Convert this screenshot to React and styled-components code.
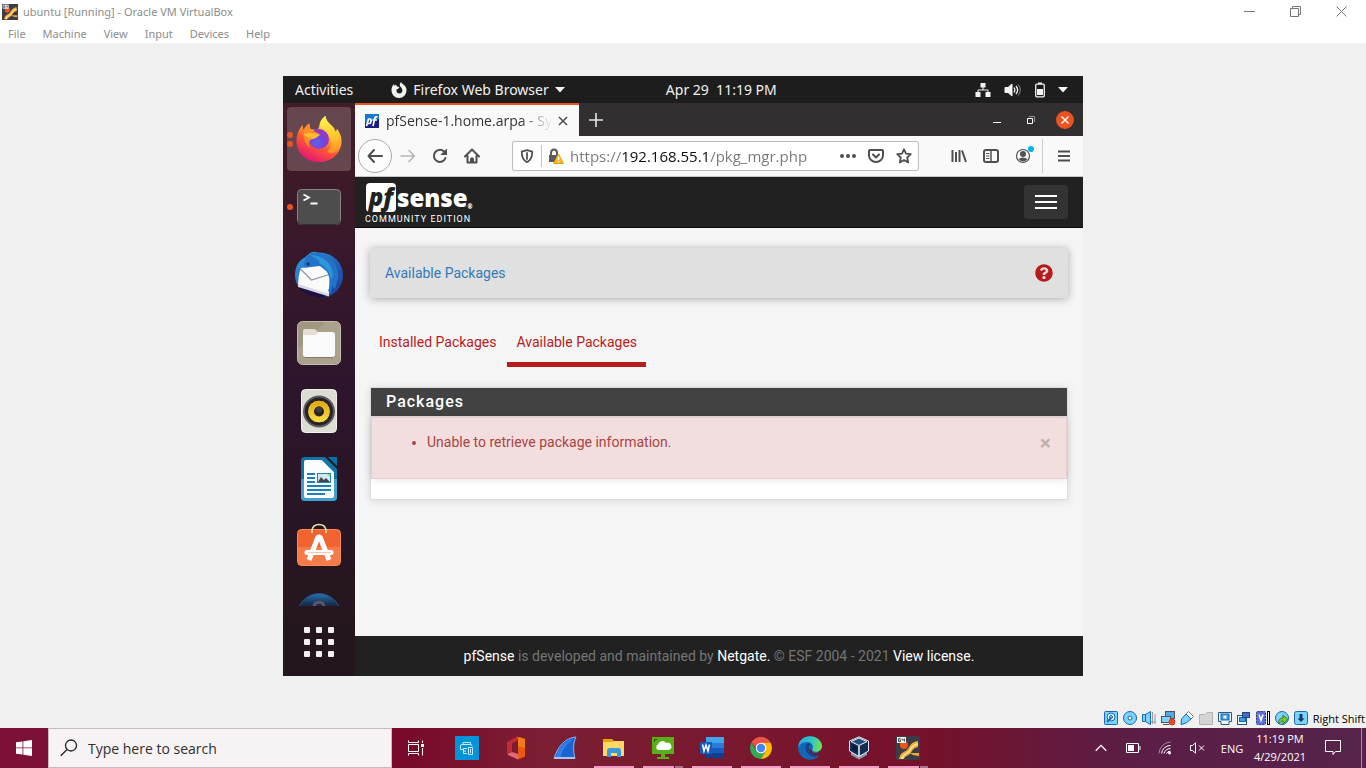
import styled, { createGlobalStyle } from "styled-components"
import { FaQuestionCircle } from "react-icons/fa";

const GlobalStyle = createGlobalStyle`
    * {
        box-sizing: border-box;
    }
    body {
        margin: 0;
        background: #f0f0f0;
        font-family: "Noto Sans", "Open Sans", sans-serif;
    }
    button {
        border: none;
        padding: 0;
        background: none;
        font: inherit;
        color: inherit;
        display: flex;
        align-items: center;
        justify-content: center;
    }
    input {
        border: none;
        padding: 0;
        background: none;
        outline: none;
        min-width: 0;
    }
    a {
        text-decoration: none;
    }
    svg {
        display: block;
        flex: none;
    }
`

/* ---------- host window ---------- */

const MachineLogo = ({ size }) => (
    <svg width={size} height={size} viewBox="0 0 24 24">
        <rect width="24" height="24" fill="#3a3d46" />
        <path d="M3 23C4 17 8 16 11 14C14 11 14 6 22 5V11C16 12 16 16 14 18C11 20 9 20 8 23Z" fill="#f6a73a" />
        <path d="M5 23C6 18 9 18 12 15.500C15 12 15 8 22 7V9C16 10 16 14 13 17C10 19 8 19 7 23Z" fill="#ffe08a" />
        <circle cx="8" cy="9" r="4" fill="#e8581c" />
        <path d="M14 17H23V20C20 20 19 19 17 19Z" fill="#f6a73a" />
        <rect x="1" y="1" width="9" height="6" fill="#f4f4f4" />
        <path d="M4.500 2.500H2.500V5.500H4.500V4H2.500M6 2.500V4H8.500M8.500 2.500V5.500" stroke="#333" fill="none" strokeWidth=".8" />
    </svg>
)

const menus = ["File", "Machine", "View", "Input", "Devices", "Help"]

function TitleBar() {
    return (
        <header>
            <Title>
                <MachineLogo size={16} />
                <h1>ubuntu [Running] - Oracle VM VirtualBox</h1>
                <HostButton aria-label="Minimize">
                    <svg width="11" height="11"><path d="M0 5.500H11" stroke="#777" /></svg>
                </HostButton>
                <HostButton aria-label="Restore">
                    <svg width="11" height="11"><path d="M.5 2.500H8.500V10.500H.5ZM2.500 2.500V.5H10.500V8.500H8.500" stroke="#777" fill="none" /></svg>
                </HostButton>
                <HostButton aria-label="Close">
                    <svg width="11" height="11"><path d="M.5 .5L10.500 10.500M10.500 .5L.5 10.500" stroke="#777" /></svg>
                </HostButton>
            </Title>
            <MenuBar>
                {menus.map((menu) => <button key={menu}>{menu}</button>)}
            </MenuBar>
        </header>
    )
}

/* ---------- gnome ---------- */

function GnomeBar() {
    return (
        <TopBar>
            <TopLeft>
                <button>Activities</button>
                <button>
                    <svg width="16" height="16" viewBox="0 0 16 16">
                        <path d="M8 16A7.500 7.500 0 0 1 .5 8C.5 5.500 1.500 3.500 3 2L3.500 4L5 2.500L6 4.500L8.500 5L7 7L5.500 7.500C5 10 6.500 11.500 8.500 11.500C11 11.500 12 9 11 7C10.500 5.500 9.500 5 9 4C8.500 2.500 9 1 10 0C10.500 2 15.500 3 15.500 8A7.500 7.500 0 0 1 8 16Z" fill="#f2f2f2" />
                    </svg>
                    Firefox Web Browser
                    <svg width="10" height="6"><path d="M0 0H10L5 5.500Z" fill="#f2f2f2" /></svg>
                </button>
            </TopLeft>
            <time>Apr 29&nbsp; 11:19 PM</time>
            <TopRight>
                <svg width="16" height="16" viewBox="0 0 16 16" fill="#f2f2f2">
                    <path d="M5.500 1H10.500V5.500H5.500ZM.5 10H5.500V15H.5ZM10.500 10H15.500V15H10.500Z" />
                    <path d="M8 5V8M3 11V8H13V11" stroke="#f2f2f2" fill="none" />
                </svg>
                <svg width="20" height="16" viewBox="0 0 20 16" fill="none" stroke="#f2f2f2">
                    <path d="M2 5.500H5L9 2V14L5 10.500H2Z" fill="#f2f2f2" />
                    <path d="M11 5.500C12 7 12 9 11 10.500M13 4C15 6.500 15 9.500 13 12" strokeWidth="1.300" />
                    <path d="M15 2.500C18 6 18 10 15 13.500" stroke="#8d8d8d" />
                </svg>
                <svg width="10" height="16" viewBox="0 0 10 16" fill="#f2f2f2">
                    <path d="M3 .5H7V2H3ZM2 7H8V13H2Z" />
                    <rect x=".7" y="2.200" width="8.600" height="12.600" rx="1" stroke="#f2f2f2" strokeWidth="1.300" fill="none" />
                </svg>
                <svg width="12" height="6"><path d="M1 0H11L6 5.500Z" fill="#f2f2f2" /></svg>
            </TopRight>
        </TopBar>
    )
}

const FirefoxLogo = () => (
    <svg width="48" height="48" viewBox="0 0 48 48">
        <defs>
            <linearGradient id="fox" x1=".8" y1="0" x2=".3" y2="1">
                <stop offset="0" stopColor="#fff44f" />
                <stop offset=".35" stopColor="#ffb32c" />
                <stop offset=".65" stopColor="#ff5634" />
                <stop offset="1" stopColor="#e2137a" />
            </linearGradient>
            <linearGradient id="tail" x1=".5" y1="0" x2=".6" y2="1">
                <stop offset="0" stopColor="#fff552" />
                <stop offset=".6" stopColor="#ffc229" />
                <stop offset="1" stopColor="#ff8a2c" />
            </linearGradient>
            <radialGradient id="globe" cx=".4" cy=".7" r=".8">
                <stop offset="0" stopColor="#5a63e8" />
                <stop offset=".5" stopColor="#7a40d8" />
                <stop offset="1" stopColor="#b02fb8" />
            </radialGradient>
        </defs>
        <path d="M24 47C11 47 1.500 38 1.500 26C1.500 19 4 14 7.500 10L8.500 15C10 12 11.500 10 14 8.500L15.500 14L21 15C26 15 22 6 30.500 1C31 7 36 9 39 13L41 17L42 14C45 18 46.500 22 46.500 27C46 39 36 47 24 47Z" fill="url(#fox)" />
        <path d="M30.500 1C31 8 38 10 41 18L42 14C46 19 47 25 46 29C44 37 38 40 32 37C38 32 37 22 31 18C26 15 21 9 30.500 1Z" fill="url(#tail)" />
        <circle cx="24" cy="24" r="10" fill="url(#globe)" />
        <path d="M14 8.500L15.500 15C20 17 23 17 25 20C22 21 22 23 18 24C13 25 13 29 15 33C9 29 8 20 9 16C10.500 13 12 10 14 8.500Z" fill="#ff8c2a" />
        <path d="M8 20C13 17 20 18 25 20C22 21 22 23 18 24Z" fill="#ffbd2e" />
    </svg>
)

const TerminalLogo = () => (
    <svg width="48" height="48" viewBox="0 0 48 48">
        <rect x="2.500" y="6.500" width="43" height="35" rx="4" fill="#4c4d4c" stroke="#858585" />
        <path d="M2.500 38V38Q3 41.500 7 41.500H41Q45 41.500 45.500 38" stroke="#313131" fill="none" />
        <path d="M8.500 11.500L14 14.500L8.500 17.500M15.500 20.500H22.500" stroke="#fff" strokeWidth="1.800" fill="none" />
    </svg>
)

const ThunderbirdLogo = () => (
    <svg width="48" height="48" viewBox="0 0 48 48">
        <defs>
            <linearGradient id="bird" x1="0" y1="0" x2="1" y2="1">
                <stop offset="0" stopColor="#2f9fe4" />
                <stop offset=".5" stopColor="#2268bd" />
                <stop offset="1" stopColor="#183a99" />
            </linearGradient>
        </defs>
        <path d="M15 2C18 0 21 .5 23 1.500C38 1 48 12 48 24C48 37 38 47 24 47L30 43L12 42C4 39 0 32 0 24C0 16 4 9 9 7Z" fill="url(#bird)" />
        <path d="M3 35C10 37 24 43 32 45L27 47C14 44 6 42 3 35Z" fill="#1b1140" />
        <path d="M6 17L25 15L35 23L34 45L3 35C3 28 4 22 6 17Z" fill="#fafafb" />
        <path d="M3 33L34 43V45.500L3 36Z" fill="#d9d6e4" />
        <path d="M5.500 18L16.500 29L34 23.500" stroke="#9193a0" strokeWidth="1.200" fill="none" />
        <path d="M9 16C8 9 12 4 18 2C34 2 44 12 43 27L40 38L37 35L36 42L33 40C37 31 34 19 26 15C20 13 12 18 9 16Z" fill="#2374c8" />
        <path d="M15 4C28 4 37 12 38 24L36 29C35 20 30 15 24 12C27 11 20 7 15 4Z" fill="#35a4e3" opacity=".7" />
        <circle cx="13" cy="13" r="1.500" fill="#17275c" />
    </svg>
)

const FilesLogo = () => (
    <svg width="48" height="48" viewBox="0 0 48 48">
        <rect x="2.500" y="2.500" width="43" height="43" rx="5" fill="#a09780" stroke="#c3bda9" />
        <path d="M3 30L30 3H41Q45 3 45 7V41Q45 45 41 45H7Q3 45 3 41Z" fill="#aaa28d" />
        <path d="M8 19V12Q8 10 10 10H19Q21 10 22 12L23 14H30V19Z" fill="#e4dfd2" />
        <path d="M8 16H20Q22 16 23 13H37Q40 13 40 16V35Q40 38 37 38H11Q8 38 8 35Z" fill="#fafafa" />
        <path d="M10 38.500H38" stroke="#81796a" />
    </svg>
)

const RhythmboxLogo = () => (
    <svg width="48" height="48" viewBox="0 0 48 48">
        <defs>
            <linearGradient id="cone" x2="0" y2="1">
                <stop offset="0" stopColor="#dfa411" />
                <stop offset="1" stopColor="#fbe04a" />
            </linearGradient>
        </defs>
        <rect x="6.500" y="2.500" width="35" height="43" rx="4" fill="#deddd4" stroke="#f3f1e9" />
        <circle cx="24" cy="24.500" r="16" fill="#5d5d61" />
        <circle cx="24" cy="24.500" r="14" fill="#24242d" />
        <circle cx="24" cy="24.500" r="11.500" fill="url(#cone)" stroke="#15151a" />
        <circle cx="24" cy="24.500" r="5" fill="#242424" />
        <circle cx="24" cy="22.500" r="3" fill="#3c3c3c" />
    </svg>
)

const WriterLogo = () => (
    <svg width="48" height="48" viewBox="0 0 48 48">
        <path d="M10 2H30L42 14V42Q42 46 38 46H10Q6 46 6 42V6Q6 2 10 2Z" fill="#0c76a8" />
        <path d="M6 24H42V42Q42 46 38 46H10Q6 46 6 42Z" fill="#41a0cd" />
        <path d="M33 2H42V11Z" fill="#0870a4" />
        <path d="M11 5H27L39 17V41Q39 43 37 43H11Q9 43 9 41V7Q9 5 11 5Z" fill="#fcfcfc" />
        <path d="M27 5L39 17V12L31 5Z" fill="#0c76a8" />
        <path d="M12 19H20M12 23H20M12 27H20M12 31H36M12 35H36M12 39H30" stroke="#1684ba" strokeWidth="2" />
        <rect x="22.500" y="18.500" width="13" height="9" fill="#d0eafb" stroke="#1684ba" />
        <path d="M23 27L26 22L29 25L31 23L35 27Z" fill="#454545" />
        <path d="M32 19H35V22Z" fill="#f1b913" />
    </svg>
)

const SoftwareLogo = () => (
    <svg width="48" height="48" viewBox="0 0 48 48">
        <rect x="2.500" y="6.500" width="43" height="36" rx="4" fill="#f16432" stroke="#f68c5b" />
        <path d="M3 24H45V38Q45 42 41 42H7Q3 42 3 38Z" fill="#f47c49" />
        <path d="M17 10V7Q18 1.500 24 1.500Q30 1.500 31 7V10" stroke="#f3e0b3" strokeWidth="1.600" fill="none" />
        <path d="M14 37L23 14H25L34 37" stroke="#fff" strokeWidth="5" strokeLinejoin="bevel" fill="none" />
        <path d="M12 29.500H36" stroke="#fff" strokeWidth="5" strokeLinecap="round" />
        <path d="M13 29.500H36" stroke="#f0b7a0" strokeWidth=".8" />
    </svg>
)

const HelpLogo = () => (
    <svg width="48" height="48" viewBox="0 0 48 48">
        <defs>
            <linearGradient id="help" x2="0" y2="1">
                <stop offset="0" stopColor="#2573b3" />
                <stop offset=".25" stopColor="#172d4c" />
                <stop offset="1" stopColor="#172d4c" />
            </linearGradient>
        </defs>
        <circle cx="24" cy="24" r="21.500" fill="url(#help)" stroke="#23517a" />
        <path d="M19 15C20 10 28 10 29 15" stroke="#5b5663" strokeWidth="3" fill="none" />
    </svg>
)

const dockApps = [
    { name: "Firefox Web Browser", Logo: FirefoxLogo, windows: 2, active: true },
    { name: "Terminal", Logo: TerminalLogo, windows: 1 },
    { name: "Thunderbird Mail", Logo: ThunderbirdLogo, windows: 0 },
    { name: "Files", Logo: FilesLogo, windows: 0 },
    { name: "Rhythmbox", Logo: RhythmboxLogo, windows: 0 },
    { name: "LibreOffice Writer", Logo: WriterLogo, windows: 0 },
    { name: "Ubuntu Software", Logo: SoftwareLogo, windows: 0 },
    { name: "Help", Logo: HelpLogo, windows: 0 },
]

function Dock() {
    return (
        <DockBar>
            <DockApps>
                {dockApps.map(({ name, Logo, windows, active }) => (
                    <DockItem key={name} aria-label={name} $active={active}>
                        <Logo />
                        <Dots>
                            {Array.from({ length: windows }, (_, i) => <i key={i} />)}
                        </Dots>
                    </DockItem>
                ))}
            </DockApps>
            <ShowApps aria-label="Show Applications">
                {Array.from({ length: 9 }, (_, i) => <i key={i} />)}
            </ShowApps>
        </DockBar>
    )
}

/* ---------- firefox ---------- */

const BrowserIcon = ({ children, size = 16 }) => (
    <svg width={size} height={size} viewBox="0 0 16 16" fill="none" stroke="currentColor" strokeWidth="2" strokeLinecap="round" strokeLinejoin="round">
        {children}
    </svg>
)

function Tabs() {
    return (
        <TabStrip>
            <Tab>
                <svg width="14" height="14" viewBox="0 0 14 14">
                    <rect width="14" height="14" fill="#1b1f83" />
                    <path d="M0 0H14V5L0 9Z" fill="#1277ce" />
                    <g fill="none" stroke="#fff" strokeWidth="1.700">
                        <path d="M1.500 12L3.500 5H5C7 5 6 9.500 4.500 9.500H3M8 12L9.800 4Q10.200 2.500 12.500 3M7.500 6H12" />
                    </g>
                </svg>
                <span>pfSense-1.home.arpa - Sy</span>
                <button aria-label="Close Tab">
                    <svg width="10" height="10"><path d="M1 1L9 9M9 1L1 9" stroke="#4a4a4a" strokeWidth="1.500" /></svg>
                </button>
            </Tab>
            <NewTab aria-label="New Tab">
                <svg width="14" height="14"><path d="M7 0V14M0 7H14" stroke="#e8e8e8" strokeWidth="1.600" /></svg>
            </NewTab>
            <WindowButton aria-label="Minimize">
                <svg width="8" height="8"><path d="M0 6.500H8" stroke="#fff" /></svg>
            </WindowButton>
            <WindowButton aria-label="Restore">
                <svg width="8" height="8" fill="none"><path d="M.5 2.500H5.500V7.500H.5Z" stroke="#fff" /><path d="M2 .5H7.500V6" stroke="#999" /></svg>
            </WindowButton>
            <WindowButton aria-label="Close">
                <svg width="18" height="18"><circle cx="9" cy="9" r="9" fill="#e95420" /><path d="M5.500 5.500L12.500 12.500M12.500 5.500L5.500 12.500" stroke="#fff" strokeWidth="1.400" /></svg>
            </WindowButton>
        </TabStrip>
    )
}

function NavBar() {
    return (
        <Nav>
            <BackButton aria-label="Back">
                <BrowserIcon><path d="M15 8H1.500M7 2L1.500 8L7 14" /></BrowserIcon>
            </BackButton>
            <NavButton aria-label="Forward" $dim>
                <BrowserIcon><path d="M1 8H14.500M9 2.500L14.500 8L9 13.500" strokeWidth="1.600" /></BrowserIcon>
            </NavButton>
            <NavButton aria-label="Reload">
                <BrowserIcon><path d="M13.500 10A6 6 0 1 1 12 3.500L14 5.500" /><path d="M14.500 1.500V6.500H9.500Z" fill="currentColor" strokeWidth="1" /></BrowserIcon>
            </NavButton>
            <NavButton aria-label="Home">
                <BrowserIcon><path d="M1 8.500L8 1.500L15 8.500M3.500 8V14.500H12.500V8" /><path d="M6.500 14V10.500Q8 9 9.500 10.500V14Z" fill="currentColor" strokeWidth="1" /></BrowserIcon>
            </NavButton>
            <UrlBar>
                <UrlButton aria-label="Tracking protection">
                    <BrowserIcon size={14}><path d="M8 1.200L14 3C14 9 12 13 8 15C4 13 2 9 2 3Z" /><path d="M8 4.500V11.500" /></BrowserIcon>
                </UrlButton>
                <UrlDivider />
                <UrlButton aria-label="Site information">
                    <svg width="16" height="16" viewBox="0 0 16 16">
                        <path d="M1 7H11V14H1Z" fill="#5b5b5b" />
                        <path d="M3 7V5Q3 1.500 6 1.500Q9 1.500 9 5V7" stroke="#5b5b5b" strokeWidth="2" fill="none" />
                        <path d="M10.500 6L15.500 15.500H5.500Z" fill="#ffb51b" stroke="#f3a000" strokeLinejoin="round" />
                        <path d="M10.500 8.500V12M10.500 13V14.500" stroke="#fff" strokeWidth="1.500" />
                    </svg>
                </UrlButton>
                <UrlInput aria-label="Address" defaultValue="https://192.168.55.1/pkg_mgr.php" />
                <UrlButton aria-label="Page actions">
                    <BrowserIcon><g fill="currentColor" stroke="none"><circle cx="2" cy="8" r="2" /><circle cx="8" cy="8" r="2" /><circle cx="14" cy="8" r="2" /></g></BrowserIcon>
                </UrlButton>
                <UrlButton aria-label="Save to Pocket">
                    <BrowserIcon><path d="M2 2H14Q15 2 15 3V7.500A7 6.500 0 0 1 1 7.500V3Q1 2 2 2ZM5 6.500L8 9.500L11 6.500" /></BrowserIcon>
                </UrlButton>
                <UrlButton aria-label="Bookmark this page">
                    <BrowserIcon><path d="M8 1.300L10 5.700L14.800 6.200L11.200 9.500L12.200 14.400L8 12L3.800 14.400L4.800 9.500L1.200 6.200L6 5.700Z" strokeWidth="1.800" /></BrowserIcon>
                </UrlButton>
            </UrlBar>
            <NavButton aria-label="Library">
                <BrowserIcon><path d="M1.500 2V14M5 4V14M8.500 2V14M11 2.500L15 14" strokeLinecap="butt" /></BrowserIcon>
            </NavButton>
            <NavButton aria-label="Sidebars">
                <BrowserIcon><rect x="1" y="2" width="14" height="12" rx="2" /><path d="M8 2V14" strokeWidth="1.500" /><path d="M3.500 5.500H6M3.500 8H6M3.500 10.500H6" strokeWidth="1" /></BrowserIcon>
            </NavButton>
            <NavButton aria-label="Account">
                <BrowserIcon><circle cx="8" cy="8" r="6.500" strokeWidth="1.200" /><g fill="currentColor" stroke="none"><circle cx="8" cy="6" r="3" /><path d="M3.500 11Q8 8 12.500 11Q8 16 3.500 11Z" /></g></BrowserIcon>
                <Badge />
            </NavButton>
            <NavDivider />
            <NavButton aria-label="Open menu">
                <BrowserIcon><path d="M2 3.500H14M2 8H14M2 12.500H14" strokeLinecap="butt" /></BrowserIcon>
            </NavButton>
        </Nav>
    )
}

/* ---------- pfSense ---------- */

function PfSense() {
    return (
        <Site>
            <SiteHeader>
                <Brand href="#">
                    <BrandName><b>pf</b>sense<small>®</small></BrandName>
                    <BrandEdition>COMMUNITY EDITION</BrandEdition>
                </Brand>
                <Toggle aria-label="Toggle navigation"><i /><i /><i /></Toggle>
            </SiteHeader>
            <Content>
                <Breadcrumb>
                    <a href="#">Available Packages</a>
                    <HelpLink href="#" aria-label="Help"><FaQuestionCircle size={18} /></HelpLink>
                </Breadcrumb>
                <TabLinks>
                    <TabLink href="#">Installed Packages</TabLink>
                    <TabLink href="#" $active>Available Packages</TabLink>
                </TabLinks>
                <Panel>
                    <PanelTitle>Packages</PanelTitle>
                    <Alert role="alert">
                        <ul>
                            <li>Unable to retrieve package information.</li>
                        </ul>
                        <button aria-label="Close">×</button>
                    </Alert>
                </Panel>
            </Content>
            <Footer>
                <p><a href="#">pfSense</a> is developed and maintained by <a href="#">Netgate.</a> © ESF 2004 - 2021 <a href="#">View license.</a></p>
            </Footer>
        </Site>
    )
}

/* ---------- virtualbox status bar ---------- */

const StatusIcon = ({ children }) => (
    <svg width="14" height="16" viewBox="0 0 14 16" fill="#7cd3fb" stroke="#1668b5">{children}</svg>
)

function StatusBar() {
    return (
        <Status>
            <StatusIcon><rect x=".5" y="1.500" width="13" height="13" rx="1" /><circle cx="7" cy="7" r="4" fill="#e6f7ff" /><circle cx="7" cy="7" r="1.500" /><path d="M3 12L7 8" strokeWidth="2" /></StatusIcon>
            <StatusIcon><circle cx="7" cy="8" r="6.500" /><circle cx="7" cy="8" r="2" fill="#fff" /></StatusIcon>
            <StatusIcon><path d="M.5 4.500H3.500V11.500H.5ZM3.500 4.500L8.500 1.500V14.500L3.500 11.500" /><path d="M10.500 2V14M13 4V14M9 12H14" stroke="#999" /></StatusIcon>
            <StatusIcon><rect x="4.500" y="1.500" width="9" height="7" fill="#4ea9e6" stroke="#555" /><rect x=".5" y="6.500" width="9" height="6" stroke="#555" /><path d="M2 14.500H8" stroke="#555" /><circle cx="11" cy="12" r="3" fill="#e54b2b" stroke="#d0381c" /></StatusIcon>
            <StatusIcon><path d="M8.500 1.500L13.500 6.500L11 9L6 4Z" fill="#fff" stroke="#777" /><path d="M6 4L11 9L6 13L1 14.500L1.500 9Z" /></StatusIcon>
            <StatusIcon><path d="M.5 4.500H6L8 2.500H13.500V14.500H.5Z" fill="#d4d4d4" stroke="#b4b4b4" /></StatusIcon>
            <StatusIcon><path d="M.5 2.500H13.500V11.500H11V14.500H3V11.500H.5Z" fill="#eef8ff" stroke="#28577f" /><rect x="3" y="4" width="8" height="6" fill="#3a9be4" /><rect x="5.500" y="5.500" width="3" height="3" fill="#fff" stroke="none" /></StatusIcon>
            <StatusIcon><rect x=".5" y="5.500" width="9" height="9" fill="#eef8ff" stroke="#28577f" /><rect x="2.500" y="7.500" width="6" height="4" fill="#3a9be4" /><rect x="5.500" y="2.500" width="7" height="5" fill="#426dc5" stroke="#253f8f" /></StatusIcon>
            <StatusIcon><rect x=".5" y="1.500" width="9" height="13" rx="1" fill="#5970d4" stroke="#28307f" strokeDasharray="2 1" /><path d="M3 4.500L5 10.500L7 4.500" stroke="#fff" strokeWidth="1.500" fill="none" /><rect x="11.500" y="1.500" width="2" height="13" fill="#fff" stroke="#000" /></StatusIcon>
            <StatusIcon><circle cx="7" cy="8" r="6.500" /><path d="M4 14C3 10 5 8 8 8V5L13 9.500L8 14V11C6 11 5 12 4 14Z" fill="#76c834" stroke="#367d18" /></StatusIcon>
            <StatusIcon><rect x=".5" y="1.500" width="13" height="13" rx="2" /><path d="M7 4V9" stroke="#123b6c" strokeWidth="3" /><path d="M3.500 8.500H10.500L7 12Z" fill="#123b6c" stroke="none" /></StatusIcon>
            <span>Right Shift</span>
        </Status>
    )
}

/* ---------- windows taskbar ---------- */

const StoreApp = () => (
    <svg width="24" height="24" viewBox="0 0 24 24" fill="none" stroke="#c8ecff">
        <rect width="24" height="24" fill="#0095da" stroke="none" />
        <path d="M8 8.500V6.500H15.500V8.500M5.500 13.500V10Q5.500 8.500 7 8.500H15.500Q17 8.500 17 10M8.500 17.500V12.500H12M8.500 15H11M5.500 13.500H8M8.500 17.500H12" />
        <path d="M13.500 11.500H17.500V18.500H13.500ZM15.500 13V17" />
    </svg>
)
const OfficeApp = () => (
    <svg width="24" height="24" viewBox="0 0 24 24">
        <path d="M3 6L13 .5V5L8 7.500V16L4 18.500Q3 18 3 17Z" fill="#c22b34" />
        <path d="M4 18L8 16L14 18V23.500L4 19Z" fill="#e16b79" />
        <path d="M13 .5L21 3V20.500L14 23.500V6Z" fill="#eb5a0c" />
        <path d="M15 1L21 3V12L14 10V3Z" fill="#f27c14" />
    </svg>
)
const WiresharkApp = () => (
    <svg width="24" height="24" viewBox="0 0 24 24">
        <path d="M1 22.500C5 10 12 2 23 1C20 7 20 15 22 22.500Z" fill="#1c63d2" stroke="#84b6f4" strokeWidth="1" />
        <path d="M3 21C6 11 12 5 20 3C12 10 8 15 8 21Z" fill="#347fe9" />
        <path d="M1 23H22V21H2Z" fill="#a6c8ed" />
    </svg>
)
const ExplorerApp = () => (
    <svg width="24" height="24" viewBox="0 0 24 24">
        <path d="M1 3H10L12 5H22V8H1Z" fill="#e5a50b" />
        <path d="M1 6H10L12 5H22V20H1Z" fill="#ffd868" />
        <path d="M5 21V15Q5 12 8 12H16Q19 12 19 15V21H15V17H9V21Z" fill="#3899dd" />
    </svg>
)
const CloudApp = () => (
    <svg width="24" height="24" viewBox="0 0 24 24">
        <path d="M1 1H23V18H14V21H18V23H6V21H10V18H1Z" fill="#58b017" />
        <path d="M3 3H6V4H4V6H3Z" fill="#245c09" />
        <path d="M7 14A3 3 0 0 1 7 8.500A4.500 4.500 0 0 1 15 7A3.500 3.500 0 0 1 18 14Z" fill="#fff" />
    </svg>
)
const WordApp = () => (
    <svg width="24" height="24" viewBox="0 0 24 24">
        <path d="M6 1H24V7H6Z" fill="#41a5ee" />
        <path d="M6 7H24V12H6Z" fill="#2b7cd3" />
        <path d="M6 12H24V17H6Z" fill="#185abd" />
        <path d="M6 17H24V22H6Z" fill="#103f91" />
        <rect y="6" width="12" height="12" rx="1" fill="#1758bc" />
        <path d="M2.500 8.500L4 15L6 9L8 15L9.500 8.500" stroke="#fff" strokeWidth="1.500" fill="none" />
    </svg>
)
const ChromeApp = () => (
    <svg width="24" height="24" viewBox="0 0 24 24">
        <path d="M12 12L2.500 6.500A11 11 0 0 1 21.500 6.500Z" fill="#ea4335" />
        <path d="M12 12V6.500H21.500A11 11 0 0 1 12 23Z" fill="#fbbc05" />
        <path d="M12 12L16.800 14.800L12 23A11 11 0 0 1 2.500 6.500L7.200 14.500Z" fill="#34a853" />
        <path d="M12 6.500H21.500A11 11 0 0 0 2.500 6.500L7 12Z" fill="#ea5347" />
        <circle cx="12" cy="12" r="5.300" fill="#fff" />
        <circle cx="12" cy="12" r="4.200" fill="#4285f4" />
    </svg>
)
const EdgeApp = () => (
    <svg width="24" height="24" viewBox="0 0 24 24">
        <defs>
            <linearGradient id="edge" x1="0" y1=".2" x2="1" y2=".4">
                <stop offset="0" stopColor="#2aa5e4" />
                <stop offset=".6" stopColor="#36c8c0" />
                <stop offset="1" stopColor="#6fe04f" />
            </linearGradient>
        </defs>
        <circle cx="12" cy="12" r="11.800" fill="#1268b8" />
        <path d="M.3 12C0 4 6 .2 12 .2C20 .2 24 6 24 10C24 15 18 17 15 15C13.500 14 15 13 15 11C15 8 12 6 9 6C4 6 1 9 .3 12Z" fill="url(#edge)" />
        <path d="M8 9C6 13 9 21 17 21C20 21 22 18 22.500 17C19 19 11 18 11 12C11 10 12 9 13 9C12 7 9 7 8 9Z" fill="#16458e" />
        <path d="M13.500 14C14 19 20 18 24 13V17L22 19C17 20 11 18 11.500 12Z" fill="#7a1429" />
    </svg>
)
const VirtualBoxApp = () => (
    <svg width="24" height="24" viewBox="0 0 24 24">
        <path d="M4 14L12 18L20 14V19L12 23.500L4 19Z" fill="#8d9bb0" />
        <path d="M12 .8L21.500 5V15L12 20.500L2.500 15V5Z" fill="#142d55" stroke="#dfe8f2" />
        <path d="M12 2L20 5.500L12 9.500L4 5.500Z" fill="#234d7c" stroke="#f3f7fb" />
        <path d="M12 10V20" stroke="#f3f7fb" strokeWidth="1.500" />
        <path d="M5 8L10 10.500V16.500L5 13.500Z" fill="#0a1d3e" />
    </svg>
)

const taskApps = [
    { name: "Microsoft Store", Icon: StoreApp },
    { name: "Office", Icon: OfficeApp },
    { name: "Wireshark", Icon: WiresharkApp },
    { name: "File Explorer", Icon: ExplorerApp, running: true },
    { name: "Remote Desktop", Icon: CloudApp, running: true, stacked: true },
    { name: "Word", Icon: WordApp, running: true },
    { name: "Chrome", Icon: ChromeApp, running: true },
    { name: "Edge", Icon: EdgeApp, running: true },
    { name: "VirtualBox Manager", Icon: VirtualBoxApp, running: true },
    { name: "ubuntu", Icon: () => <MachineLogo size={24} />, running: true, stacked: true },
]

function Taskbar() {
    return (
        <Bar>
            <StartButton aria-label="Start">
                <svg width="16" height="16" viewBox="0 0 16 16" fill="#fff">
                    <path d="M0 2.300L6.500 1.400V7.500H0ZM7.300 1.300L16 0V7.500H7.300ZM0 8.300H6.500V14.600L0 13.700ZM7.300 8.300H16V16L7.300 14.700Z" />
                </svg>
            </StartButton>
            <Search>
                <svg width="18" height="18" viewBox="0 0 18 18" fill="none" stroke="#222" strokeWidth="1.300">
                    <circle cx="11" cy="6.500" r="5.500" /><path d="M7 10.500L.8 16.700" />
                </svg>
                <input type="text" aria-label="Search" placeholder="Type here to search" />
            </Search>
            <StartButton aria-label="Task View">
                <svg width="18" height="16" viewBox="0 0 18 16" fill="none" stroke="#fff">
                    <path d="M1.500 .5V2.500H11.500V.5M1.500 15.500V13.500H11.500V15.500M1.500 4.500H11.500V11.500H1.500ZM15.500 .5V3M15.500 8V15.500" />
                    <rect x="14" y="4" width="3" height="3" fill="#fff" stroke="none" />
                </svg>
            </StartButton>
            <TaskApps>
                {taskApps.map(({ name, Icon, running, stacked }) => (
                    <TaskApp key={name} aria-label={name} $running={running} $stacked={stacked}>
                        <Icon />
                    </TaskApp>
                ))}
            </TaskApps>
            <Tray>
                <TrayButton aria-label="Show hidden icons">
                    <svg width="12" height="8"><path d="M.7 6.700L6 1.400L11.300 6.700" stroke="#fff" strokeWidth="1.300" fill="none" /></svg>
                </TrayButton>
                <TrayButton aria-label="Battery">
                    <svg width="15" height="10"><path d="M.5 .5H12.500V9.500H.5ZM14 3V7" stroke="#fff" fill="none" /><rect x="2" y="2" width="6" height="6" fill="#fff" /></svg>
                </TrayButton>
                <TrayButton aria-label="Network">
                    <svg width="14" height="14" fill="none" stroke="#fff">
                        <path d="M1 12.500A12 12 0 0 1 12.500 1" stroke="#a2889f" />
                        <path d="M3.500 12.500A9 9 0 0 1 12.500 4.500M6 12.500A7 7 0 0 1 12.500 7.500M8.500 12.500A4 4 0 0 1 12.500 10.200" />
                        <circle cx="11.500" cy="12" r="1" fill="#fff" />
                    </svg>
                </TrayButton>
                <TrayButton aria-label="Volume">
                    <svg width="15" height="12" fill="none" stroke="#fff"><path d="M.5 3.500H2.500L5.500 .8V11.200L2.500 8.500H.5ZM9 3.500L14 8.500M14 3.500L9 8.500" /></svg>
                </TrayButton>
                <Language>ENG</Language>
                <Clock>
                    <time>11:19 PM</time>
                    <time>4/29/2021</time>
                </Clock>
                <Notifications aria-label="Notifications">
                    <svg width="16" height="16"><path d="M.5 .5H15.500V11.500H10.500L8 14.500V11.500H.5Z" stroke="#fff" strokeWidth="1" fill="none" /></svg>
                </Notifications>
                <ShowDesktop aria-label="Show desktop" />
            </Tray>
        </Bar>
    )
}

export default function App() {
    return (
        <Page>
            <GlobalStyle />
            <TitleBar />
            <Guest>
                <GnomeBar />
                <Desktop>
                    <Dock />
                    <Browser>
                        <Tabs />
                        <NavBar />
                        <PfSense />
                    </Browser>
                </Desktop>
            </Guest>
            <StatusBar />
            <Taskbar />
        </Page>
    )
}

const Page = styled.div`
    display: flex;
    flex-direction: column;
    min-height: 100vh;
`

const Title = styled.div`
    display: flex;
    align-items: center;
    height: 23px;
    padding: 0 2px;
    background: #fff;
    color: #8c8c8c;
    h1 {
        flex: 1;
        margin: 0 0 0 5px;
        font-size: 11px;
        font-weight: 400;
    }
`

const HostButton = styled.button`
    width: 46px;
    height: 22px;
`

const MenuBar = styled.nav`
    display: flex;
    gap: 1px;
    height: 20px;
    background: #fff;
    font-size: 11px;
    color: #8c8c8c;
    button {
        padding: 0 8px;
    }
`

const Guest = styled.main`
    display: flex;
    flex-direction: column;
    flex: 1;
    width: 100%;
    max-width: 800px;
    margin: 33px auto 32px;
`

const TopBar = styled.div`
    display: grid;
    grid-template-columns: 5fr max-content 4fr;
    align-items: center;
    height: 27px;
    background: #1d1d1d;
    color: #f2f2f2;
    font-size: 14px;
`

const TopLeft = styled.div`
    display: flex;
    gap: 38px;
    padding-left: 12px;
    button {
        gap: 6px;
    }
`

const TopRight = styled.div`
    display: flex;
    align-items: center;
    justify-content: flex-end;
    gap: 12px;
    padding-right: 14px;
`

const Desktop = styled.div`
    display: flex;
    flex: 1;
`

const DockBar = styled.nav`
    display: flex;
    flex-direction: column;
    width: 72px;
    background: linear-gradient(#431c28, #34172b 35%, #2d152d 50%, #26161f 85%, #22161f);
`

const DockApps = styled.div`
    display: flex;
    flex-direction: column;
    align-items: center;
    gap: 4px;
    flex: 1 1 0;
    min-height: 0;
    padding-top: 4px;
    overflow: hidden;
`

const DockItem = styled.button`
    position: relative;
    flex: none;
    width: 64px;
    height: 64px;
    border-radius: 4px;
    background: ${(props) => (props.$active ? "#67474f" : "none")};
`

const Dots = styled.span`
    position: absolute;
    left: 0;
    top: 0;
    bottom: 0;
    display: flex;
    flex-direction: column;
    justify-content: center;
    gap: 3px;
    i {
        width: 6px;
        height: 6px;
        border-radius: 50%;
        background: #e95420;
    }
`

const ShowApps = styled.button`
    display: grid;
    grid-template-columns: repeat(3, 6px);
    gap: 6px;
    place-content: center;
    height: 70px;
    padding-top: 2px;
    i {
        height: 6px;
        border-radius: 1px;
        background: #f0f0f0;
    }
`

const Browser = styled.section`
    display: flex;
    flex-direction: column;
    flex: 1;
    min-width: 0;
`

const TabStrip = styled.div`
    display: flex;
    height: 33px;
    padding-right: 1px;
    background: #322f30;
`

const Tab = styled.div`
    display: flex;
    align-items: center;
    width: 224px;
    padding: 0 5px 0 10px;
    border-top: 2px solid #e95420;
    background: #f9f9fa;
    color: #333;
    font-family: "Open Sans", "Noto Sans", sans-serif;
    font-size: 14px;
    span {
        flex: 1;
        margin-left: 7px;
        white-space: nowrap;
        mask-image: linear-gradient(to left, transparent, #000 32px);
    }
    button {
        width: 24px;
        height: 24px;
    }
`

const NewTab = styled.button`
    width: 34px;
    margin-right: auto;
`

const WindowButton = styled.button`
    width: 34px;
`

const Nav = styled.div`
    display: flex;
    align-items: center;
    height: 41px;
    padding: 0 3px;
    border-bottom: 1px solid #c8c8c8;
    background: #f9f9fa;
    color: #4f4f50;
`

const NavButton = styled.button`
    position: relative;
    width: 32px;
    height: 32px;
    color: ${(props) => (props.$dim ? "#b5b5b6" : "inherit")};
`

const BackButton = styled(NavButton)`
    width: 34px;
    height: 34px;
    border: 1px solid #a9a9aa;
    border-radius: 50%;
    background: #fdfdfd;
`

const Badge = styled.span`
    position: absolute;
    top: 6px;
    right: 5px;
    width: 6px;
    height: 6px;
    border-radius: 50%;
    background: #00b3f4;
`

const NavDivider = styled.span`
    width: 1px;
    height: 34px;
    margin: 0 5px 0 3px;
    background: #d0d0d1;
`

const UrlBar = styled.div`
    display: flex;
    align-items: center;
    flex: 1;
    min-width: 0;
    height: 30px;
    margin: 0 24px;
    border: 1px solid #bfbfc0;
    border-radius: 2px;
    background: #fff;
`

const UrlButton = styled.button`
    width: 28px;
    height: 28px;
`

const UrlDivider = styled.span`
    width: 1px;
    height: 22px;
    background: #c4c4c5;
`

/* host name is darker than the rest of the address */
const UrlInput = styled.input`
    flex: 1;
    height: 28px;
    font-family: "Open Sans", "Noto Sans", sans-serif;
    font-size: 15px;
    color: transparent;
    background: linear-gradient(to right, #777 52px, #0c0c0d 52px, #0c0c0d 140px, #777 140px);
    background-clip: text;
`

const Site = styled.div`
    display: flex;
    flex-direction: column;
    flex: 1;
    background: #f5f5f5;
    font-family: Roboto, sans-serif;
    font-size: 14px;
    line-height: 20px;
`

const SiteHeader = styled.header`
    display: flex;
    align-items: center;
    justify-content: space-between;
    height: 51px;
    padding: 0 15px 0 10px;
    border-bottom: 1px solid #080808;
    background: #212121;
`

const Brand = styled.a`
    padding-top: 3px;
    color: #fff;
`

const BrandName = styled.div`
    display: flex;
    align-items: center;
    height: 30px;
    font-family: "Open Sans", sans-serif;
    font-size: 24px;
    font-weight: 800;
    line-height: 30px;
    b {
        width: 30px;
        height: 29px;
        margin: 0 1px;
        border-radius: 4px;
        background: #fff;
        color: #212121;
        font-style: italic;
        font-weight: 800;
        line-height: 28px;
        text-align: center;
    }
    small {
        align-self: flex-end;
        font-size: 6px;
        line-height: 12px;
    }
`

const BrandEdition = styled.div`
    font-size: 9px;
    line-height: 12px;
    letter-spacing: 1px;
`

const Toggle = styled.button`
    flex-direction: column;
    gap: 4px;
    width: 44px;
    height: 34px;
    border-radius: 3px;
    background: #333;
    i {
        width: 22px;
        height: 2px;
        background: #fff;
    }
`

const Content = styled.div`
    flex: 1;
    padding: 20px 15px;
`

const Breadcrumb = styled.div`
    display: flex;
    align-items: center;
    justify-content: space-between;
    height: 50px;
    padding: 0 15px;
    border-radius: 2px;
    background: #e0e0e0;
    box-shadow: 0 1px 8px rgba(0, 0, 0, 0.3);
    a {
        color: #337ab7;
    }
`

const HelpLink = styled.a`
    && {
        color: #b71c1c;
    }
`

const TabLinks = styled.nav`
    display: flex;
    gap: 2px;
    margin: 24px 0 20px;
`

const TabLink = styled.a`
    padding: 10px 9px;
    border-bottom: 5px solid ${(props) => (props.$active ? "#b71c1c" : "transparent")};
    color: #b71c1c;
`

const Panel = styled.section`
    padding-bottom: 20px;
    border: 1px solid #ddd;
    background: #fff;
    box-shadow: 0 1px 8px rgba(0, 0, 0, 0.12);
`

const PanelTitle = styled.h2`
    height: 29px;
    margin: 0;
    padding: 0 15px;
    border-bottom: 1px solid #ddd;
    background: #424242;
    color: #fff;
    font-size: 16px;
    font-weight: 500;
    line-height: 28px;
    letter-spacing: 1px;
`

const Alert = styled.div`
    display: flex;
    justify-content: space-between;
    align-items: flex-start;
    padding: 14px 15px 24px;
    border: 1px solid #ebccd1;
    background: #f2dede;
    box-shadow: 0 1px 8px rgba(0, 0, 0, 0.1);
    color: #a94442;
    ul {
        margin: 0;
        padding-left: 40px;
    }
    button {
        height: 22px;
        color: #c1b1b1;
        font-size: 21px;
        font-weight: 700;
    }
`

const Footer = styled.footer`
    display: flex;
    align-items: center;
    justify-content: center;
    height: 40px;
    background: #212121;
    color: #757575;
    p {
        margin: 0;
    }
    a {
        color: #fff;
    }
`

const Status = styled.div`
    display: flex;
    align-items: center;
    justify-content: flex-end;
    gap: 5px;
    height: 20px;
    padding-right: 1px;
    font-family: "Open Sans", "Noto Sans", sans-serif;
    font-size: 11px;
    color: #000;
`

const Bar = styled.div`
    display: flex;
    height: 40px;
    background: linear-gradient(to right, #7c1037, #780b2b 30%, #7c1f32 40%, #75112a 68%, #5c1d45 82%, #56244c);
    color: #fff;
`

const StartButton = styled.button`
    flex: none;
    width: 48px;
`

const Search = styled.label`
    display: flex;
    align-items: center;
    gap: 10px;
    flex: 0 1 344px;
    padding: 0 11px;
    border: 1px solid #c3bdc0;
    background: #f7f2f4;
    input {
        flex: 1;
        font-family: "Open Sans", "Noto Sans", sans-serif;
        font-size: 14px;
    }
    input::placeholder {
        color: #303030;
    }
`

const TaskApps = styled.div`
    display: flex;
    gap: 1px;
    flex: 1;
    padding-left: 3px;
`

const TaskApp = styled.button`
    flex: none;
    width: 48px;
    background: ${(props) => {
        if (props.$stacked) return "linear-gradient(to right, #f29cc5 31px, #5c1030 31px, #5c1030 32px, #b0718f 32px) 4px 38px / 40px 2px no-repeat"
        if (props.$running) return "linear-gradient(#f29cc5, #f29cc5) 4px 38px / 40px 2px no-repeat"
        return "none"
    }};
`

const Tray = styled.div`
    display: flex;
    flex: none;
    font-family: "Open Sans", "Noto Sans", sans-serif;
    font-size: 11px;
`

const TrayButton = styled.button`
    width: 32px;
`

const Language = styled.button`
    width: 38px;
`

const Clock = styled.button`
    flex-direction: column;
    width: 58px;
    line-height: 18px;
`

const Notifications = styled.button`
    width: 48px;
`

const ShowDesktop = styled.button`
    width: 5px;
    margin-left: 4px;
    border-left: 1px solid #a98a9f;
`
